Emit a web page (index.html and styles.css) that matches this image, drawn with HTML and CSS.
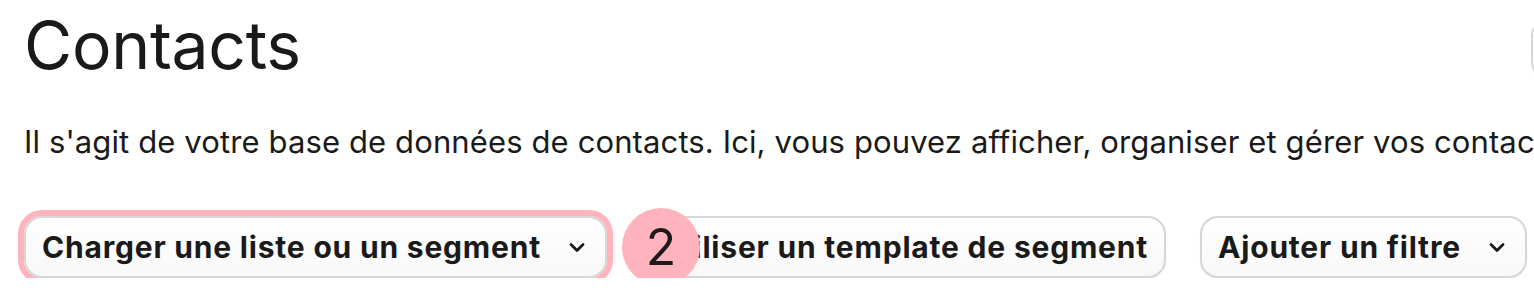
FILE: index.html
```html
<!DOCTYPE html>
<html lang="fr">
<head>
    <meta charset="UTF-8">
    <meta name="viewport" content="width=device-width, initial-scale=1.0">
    <title>Contacts</title>
    <link rel="stylesheet" href="styles.css">
</head>
<body>

<div class="page">
    <div class="header">
        <h1>Contacts</h1>
        <button class="btn btn-header">Importer des contacts</button>
    </div>

    <p class="intro">Il s'agit de votre base de données de contacts. Ici, vous pouvez afficher, organiser et gérer vos contacts.</p>

    <div class="toolbar">
        <div class="step">
            <button class="btn btn-highlight">
                Charger une liste ou un segment
                <svg class="chevron" viewBox="0 0 24 24" width="24" height="24"><path d="M6 9.5l6 6 6-6" fill="none" stroke="#1a1a1a" stroke-width="2.8" stroke-linecap="round" stroke-linejoin="round"/></svg>
            </button>
            <span class="badge">2</span>
        </div>
        <button class="btn">Utiliser un template de segment</button>
        <button class="btn">
            Ajouter un filtre
            <svg class="chevron" viewBox="0 0 24 24" width="24" height="24"><path d="M6 9.5l6 6 6-6" fill="none" stroke="#1a1a1a" stroke-width="2.8" stroke-linecap="round" stroke-linejoin="round"/></svg>
        </button>
    </div>
</div>

</body>
</html>
```

FILE: styles.css
```css
body {
    font-family: Inter, 'Noto Sans', sans-serif;
    margin: 0;
    padding: 0;
    background-color: #fff;
    color: #1a1a1a;
    overflow: hidden;
}

.page {
    padding: 0 0 0 24px;
    width: 1800px;
}

.header {
    display: flex;
    align-items: flex-start;
}

h1 {
    flex: 0 0 1507px;
    margin: 13px 0 0 0;
    font-size: 66px;
    font-weight: 400;
    line-height: 65px;
    letter-spacing: -0.3px;
}

.btn-header {
    margin-top: 18px;
    height: 56px;
}

.intro {
    margin: 44px 0 0 0;
    font-size: 31px;
    line-height: 36px;
    letter-spacing: 0.12px;
    white-space: nowrap;
}

.toolbar {
    display: flex;
    align-items: center;
    gap: 34px;
    margin-top: 56px;
}

.step {
    position: relative;
    display: flex;
}

.btn {
    display: inline-flex;
    align-items: center;
    gap: 24px;
    height: 62px;
    padding: 0 16px;
    font-family: Inter, 'Noto Sans', sans-serif;
    font-size: 30px;
    font-weight: 700;
    letter-spacing: 0.8px;
    color: #1a1a1a;
    background: linear-gradient(#ffffff, #f8f8f8);
    border: 2px solid #d6d6d6;
    border-radius: 18px;
    box-shadow: 0 1px 2px rgba(0, 0, 0, 0.06);
    white-space: nowrap;
    cursor: pointer;
}

.btn-highlight {
    box-shadow: 0 0 0 6px #ffb3bd;
}

.chevron {
    flex: none;
}

.badge {
    position: absolute;
    left: calc(100% + 15px);
    top: -8px;
    width: 78px;
    height: 78px;
    border-radius: 50%;
    background-color: #ffb3bd;
    display: flex;
    align-items: center;
    justify-content: center;
    font-size: 50px;
    line-height: 1;
    z-index: 2;
}
```
